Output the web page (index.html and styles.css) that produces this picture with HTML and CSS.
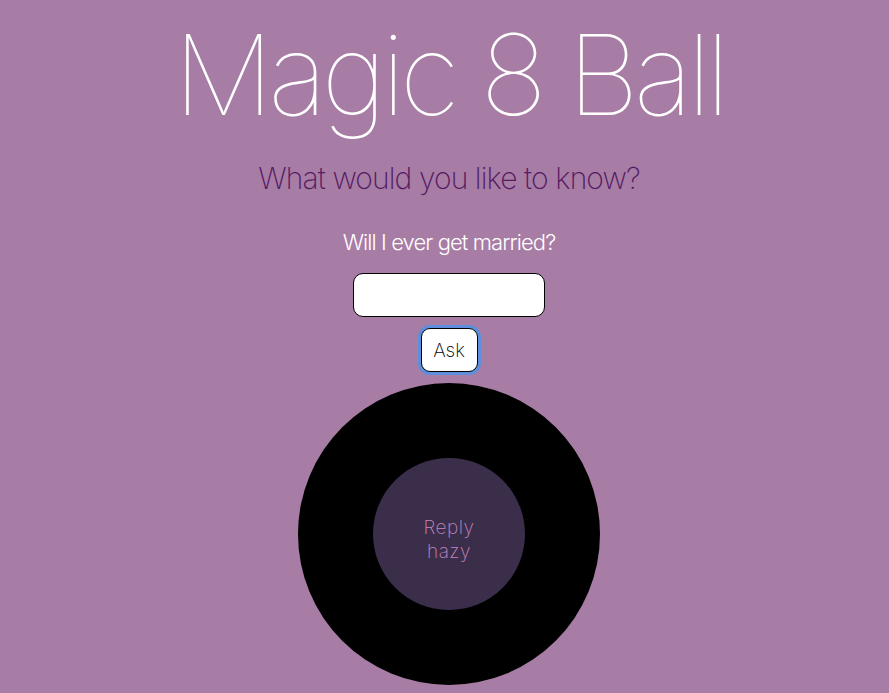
FILE: index.html
```html
<!DOCTYPE html>
<html lang="en">
<head>
<meta charset="utf-8">
<title>Magic 8 Ball</title>
<link rel="stylesheet" href="styles.css">
</head>
<body>
<main class="page">
  <h1 class="title">Magic 8 Ball</h1>
  <h2 class="subtitle">What would you like to know?</h2>
  <p class="question">Will I ever get married?</p>
  <input class="ask-input" type="text" aria-label="Question">
  <button class="ask-btn" type="button">Ask</button>
  <div class="ball">
    <div class="window">
      <span class="answer">Reply<br>hazy</span>
    </div>
  </div>
</main>
</body>
</html>
```

FILE: styles.css
```css
html, body {
  margin: 0;
  padding: 0;
}
body {
  background: #a77ca5;
  font-family: Inter, "Liberation Sans", sans-serif;
  font-weight: 200;
  height: 693px;
  overflow: hidden;
}
.page {
  display: flex;
  flex-direction: column;
  align-items: center;
  padding-left: 9px;
}
.title {
  margin: 14px 0 0 0;
  font-size: 112px;
  line-height: 120px;
  font-weight: 100;
  color: #ffffff;
  letter-spacing: -5.5px;
}
.subtitle {
  margin: 26px 0 0 0;
  font-size: 30px;
  line-height: 36px;
  font-weight: 200;
  color: #541a62;
  letter-spacing: -0.9px;
}
.question {
  margin: 32px 0 0 0;
  font-size: 22px;
  line-height: 28px;
  font-weight: 300;
  color: #ffffff;
  letter-spacing: -0.9px;
}
.ask-input {
  margin-top: 17px;
  width: 192px;
  height: 44px;
  box-sizing: border-box;
  border: 1px solid #000;
  border-radius: 10px;
  background: #fff;
}
.ask-btn {
  margin-top: 11px;
  width: 57px;
  height: 44px;
  box-sizing: border-box;
  border: 1px solid #000;
  border-radius: 9px;
  background: #fff;
  font-family: inherit;
  font-weight: 200;
  font-size: 19px;
  color: #000;
  outline: none;
  box-shadow: 0 0 0 3px #5d8fdc;
  padding: 0;
}
.ball {
  margin-top: 11px;
  width: 302px;
  height: 302px;
  border-radius: 50%;
  background: #000;
  display: flex;
  align-items: center;
  justify-content: center;
}
.window {
  width: 152px;
  height: 152px;
  border-radius: 50%;
  background: #3a2e4b;
  display: flex;
  align-items: center;
  justify-content: center;
}
.answer {
  padding-top: 12px;
  text-align: center;
  color: #c585bf;
  font-size: 19px;
  line-height: 24px;
  font-weight: 200;
  letter-spacing: 0.5px;
}
```
